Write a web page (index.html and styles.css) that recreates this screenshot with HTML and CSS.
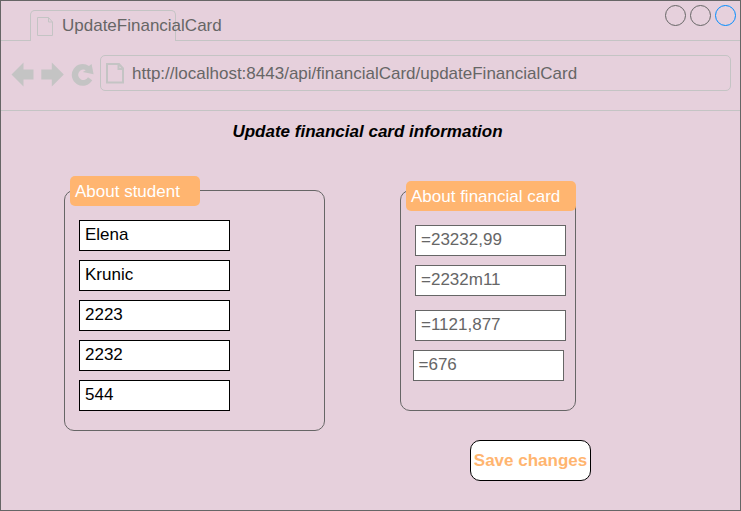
FILE: index.html
```html
<!DOCTYPE html>
<html lang="en">
<head>
<meta charset="utf-8">
<title>UpdateFinancialCard</title>
<link rel="stylesheet" href="styles.css">
</head>
<body>
<div class="window">
  <header class="tabs">
    <div class="tab">
      <svg class="tab-icon" width="18" height="20" viewBox="0 0 18 20"><path d="M1.5 1.5H12.5L16.5 6V19.5H1.5ZM12.5 1.5V6H16.5"/></svg>
      <span class="tab-title">UpdateFinancialCard</span>
    </div>
    <svg class="controls" width="72" height="22" viewBox="0 0 72 22"><circle cx="11.5" cy="11.5" r="10"/><circle cx="36.5" cy="11.5" r="10"/><circle class="active" cx="61.5" cy="11.5" r="10"/></svg>
  </header>
  <nav class="toolbar">
    <svg class="nav" width="90" height="30" viewBox="10 60 90 30">
      <path d="M11.5 74.5L23.5 62.5V69.5H33.5V79.5H23.5V86.5Z"/>
      <path d="M63.8 74.5L51.8 62.5V69.5H41.3V79.5H51.8V86.5Z"/>
      <path d="M91.6 64L93.6 74.3L82.8 71.9L85.8 70.2A5.2 5.2 0 1 0 88 77.2L92.2 80.2A10.9 10.9 0 1 1 89 66Z"/>
    </svg>
    <div class="address">
      <svg class="page-icon" width="20" height="22" viewBox="0 0 20 22"><path d="M2 2H14L18 6.5V20.5H2ZM13.5 2V7H18"/></svg>
      <span>http://localhost:8443/api/financialCard/updateFinancialCard</span>
    </div>
  </nav>
  <main>
    <h1>Update financial card information</h1>
    <div class="groups">
      <section class="group student">
        <h2>About student</h2>
        <div class="field">Elena</div>
        <div class="field">Krunic</div>
        <div class="field">2223</div>
        <div class="field">2232</div>
        <div class="field">544</div>
      </section>
      <section class="group card">
        <h2>About financial card</h2>
        <div class="field">=23232,99</div>
        <div class="field">=2232m11</div>
        <div class="field spaced">=1121,877</div>
        <div class="field shifted">=676</div>
      </section>
    </div>
    <button class="save">Save changes</button>
  </main>
</div>
</body>
</html>
```
FILE: styles.css
```css
* { box-sizing: border-box; }
body {
  margin: 0;
  font: 17px/20px "Liberation Sans", Arial, sans-serif;
  color: #666;
}
.window {
  width: 741px;
  height: 511px;
  border: 1px solid #666;
  background: #e6d0dc;
  overflow: hidden;
}
.tabs {
  display: flex;
  justify-content: space-between;
  height: 40px;
  border-bottom: 1px solid #c4c4c4;
}
.tab {
  display: flex;
  width: 146px;
  height: 31px;
  margin: 9px 0 0 29px;
  padding: 5px 0 0 5px;
  border: 1px solid #c4c4c4;
  border-bottom: 0;
  border-radius: 5px 5px 0 0;
  background: #e6d0dc;
  white-space: nowrap;
}
.tab-icon {
  flex: none;
  fill: none;
  stroke: #c4c4c4;
}
.tab-title { margin-left: 8px; }
.controls {
  margin: 3px 4px 0 0;
  overflow: visible;
  fill: none;
  stroke: #666;
}
.controls .active { stroke: #008cff; }
.toolbar {
  display: flex;
  height: 70px;
  border-bottom: 1px solid #c4c4c4;
}
.nav {
  flex: none;
  margin: 19px 0 0 9px;
  fill: #c4c4c4;
}
.address {
  display: flex;
  width: 631px;
  height: 36px;
  margin-top: 14px;
  padding: 6px 0 0 4px;
  border: 1px solid #c4c4c4;
  border-radius: 5px;
}
.page-icon {
  fill: none;
  stroke: #c4c4c4;
  stroke-width: 2;
}
.address span { margin: 2px 0 0 7px; }
h1 {
  width: 733px;
  margin: 11px 0 0;
  color: #000;
  font: italic bold 17px/20px "Liberation Sans", Arial, sans-serif;
  text-align: center;
}
.groups {
  display: flex;
  gap: 75px;
  align-items: flex-start;
  margin: 48px 0 0 63px;
}
.group {
  border: 1px solid #666;
  border-radius: 10px;
}
.student {
  width: 261px;
  height: 241px;
  padding-left: 14px;
}
.card {
  width: 176px;
  height: 221px;
  padding-left: 14px;
}
h2 {
  width: 130px;
  height: 30px;
  margin: -15.5px 0 14.5px -9.5px;
  padding: 6px 0 0 5.5px;
  border-radius: 5px;
  background: #ffb570;
  color: #fff;
  font-size: 17px;
  font-weight: normal;
  line-height: 20px;
  white-space: nowrap;
}
.card h2 {
  width: 170px;
  margin-top: -10.5px;
}
.field {
  width: 151px;
  height: 31px;
  margin-bottom: 9px;
  padding: 4px 5px;
  border: 1px solid #000;
  background: #fff;
  color: #000;
}
.card .field {
  border-color: #666;
  color: #666;
}
.card .spaced { margin-top: 14px; }
.card .shifted { margin-left: -2.5px; }
.save {
  display: block;
  width: 121px;
  height: 41px;
  margin: 9px 0 0 469px;
  padding: 0;
  border: 1px solid #000;
  border-radius: 10px;
  background: #fff;
  color: #ffb570;
  font: bold 17px/20px "Liberation Sans", Arial, sans-serif;
}
```
